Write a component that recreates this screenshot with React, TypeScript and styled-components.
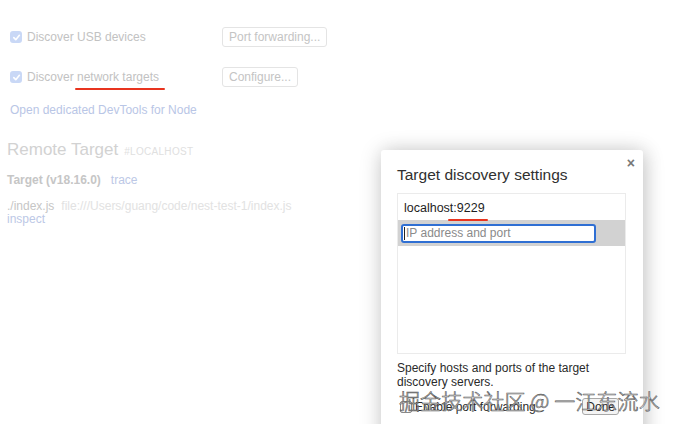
import React from "react";
import styled, { createGlobalStyle } from "styled-components";

const Global = createGlobalStyle`
  html, body { margin: 0; padding: 0; background: #fff; }
  body { font-family: "Liberation Sans", Arial, sans-serif; }
`;

const Page = styled.div`
  position: relative;
  width: 676px;
  height: 424px;
  overflow: hidden;
  background: #fff;
`;

const Content = styled.div`
  display: flex;
  flex-direction: column;
  padding: 27px 0 0 7px;
`;

const OptionRow = styled.div<{ $mt?: number }>`
  display: grid;
  grid-template-columns: 212px auto;
  align-items: center;
  height: 20px;
  margin-top: ${(p) => p.$mt ?? 0}px;
  padding-left: 3px;
`;

const CheckLabel = styled.label`
  display: flex;
  align-items: center;
  gap: 5px;
  font-size: 12px;
  color: #c2c2c2;
`;

const FakeCheck = styled.span`
  width: 12px;
  height: 12px;
  border-radius: 3px;
  background: #c9d8f6;
  display: inline-flex;
  align-items: center;
  justify-content: center;
`;

const Marked = styled.span`
  position: relative;
  &::after {
    content: "";
    position: absolute;
    left: -2px;
    right: -6px;
    bottom: -6px;
    height: 2.5px;
    border-radius: 2px;
    background: #e8341f;
  }
`;

const FadedButton = styled.button`
  justify-self: start;
  height: 20px;
  padding: 0 6px;
  font-family: "Liberation Sans", Arial, sans-serif;
  font-size: 12px;
  color: #c4c4c4;
  background: #fff;
  border: 1px solid #e4e4e4;
  border-radius: 3px;
`;

const NodeLink = styled.div`
  margin-top: 16px;
  padding-left: 3px;
  font-size: 12px;
  color: #b9c6e6;
`;

const Heading = styled.div`
  margin-top: 23px;
  display: flex;
  align-items: baseline;
  gap: 6px;
  font-size: 17px;
  color: #d2d2d2;
`;

const Tag = styled.span`
  font-size: 10px;
  color: #e0e0e0;
  letter-spacing: 0.3px;
`;

const TargetLine = styled.div`
  margin-top: 13px;
  display: flex;
  align-items: baseline;
  gap: 10px;
  font-size: 12px;
`;

const TargetName = styled.span`
  font-weight: bold;
  color: #c6c6c6;
`;

const SoftLink = styled.span`
  color: #bcc8e6;
`;

const FileLine = styled.div`
  margin-top: 13px;
  display: flex;
  gap: 7px;
  font-size: 12px;
  line-height: 13px;
  color: #c6c6c6;
`;

const FilePath = styled.span`
  color: #e2e2e2;
`;

const Inspect = styled.div`
  font-size: 12px;
  line-height: 13px;
  color: #bcc8e6;
`;

const Dialog = styled.div`
  position: absolute;
  left: 381px;
  top: 150px;
  width: 262px;
  height: 300px;
  box-sizing: border-box;
  padding: 14px 17px 0 16px;
  background: #fff;
  border-radius: 3px;
  box-shadow: 0 2px 22px rgba(0, 0, 0, 0.2), 4px 0 18px rgba(0, 0, 0, 0.08);
  display: flex;
  flex-direction: column;
`;

const Close = styled.span`
  position: absolute;
  top: 5px;
  right: 8px;
  font-size: 14px;
  font-weight: bold;
  color: #777;
`;

const Title = styled.div`
  font-size: 15.5px;
  color: #303030;
  line-height: 22px;
`;

const ListBox = styled.div`
  margin-top: 7px;
  height: 159px;
  border: 1px solid #ebebeb;
  display: flex;
  flex-direction: column;
`;

const ListItem = styled.div`
  height: 26px;
  display: flex;
  align-items: center;
  padding: 1px 0 0 6px;
  box-sizing: border-box;
  font-size: 12.5px;
  color: #1e1e1e;
  font-weight: 500;
`;

const Port = styled.span`
  position: relative;
  &::after {
    content: "";
    position: absolute;
    left: -5px;
    right: -3px;
    bottom: -6px;
    height: 2px;
    border-radius: 2px;
    background: #e8341f;
  }
`;

const SelectedRow = styled.div`
  height: 26px;
  background: #d2d2d2;
  display: flex;
  align-items: center;
  padding-left: 3px;
`;

const AddressInput = styled.div`
  width: 190px;
  height: 15px;
  border: 2px solid #2f6fd3;
  border-radius: 3px;
  background: #fff;
  display: flex;
  align-items: center;
  font-size: 12px;
  color: #8a8a8a;
  padding-left: 1px;
`;

const Caret = styled.span`
  width: 1px;
  height: 13px;
  background: #222;
  margin-right: 1px;
`;

const Hint = styled.div`
  margin-top: 7px;
  font-size: 12px;
  line-height: 14px;
  color: #2a2a2a;
  width: 210px;
`;

const Footer = styled.div`
  margin-top: 9px;
  display: flex;
  align-items: center;
  justify-content: space-between;
  padding-right: 7px;
`;

const PortCheck = styled.label`
  display: flex;
  align-items: center;
  gap: 3px;
  font-size: 12px;
  color: #2a2a2a;
  padding-left: 3px;
`;

const EmptyBox = styled.span`
  width: 10px;
  height: 10px;
  border: 1px solid #8a8a8a;
  border-radius: 2px;
  background: #fff;
`;

const DoneButton = styled.button`
  height: 17px;
  padding: 0 3px;
  font-family: "Liberation Sans", Arial, sans-serif;
  font-size: 12px;
  color: #222;
  background: #f4f4f4;
  border: 1px solid #a8a8a8;
  border-radius: 3px;
`;

const Watermark = styled.div`
  position: absolute;
  left: 399px;
  top: 385px;
  font-family: "Noto Sans CJK SC", "Noto Sans", sans-serif;
  font-weight: 300;
  font-size: 21px;
  line-height: 30px;
  white-space: nowrap;
  color: rgba(255, 255, 255, 0.92);
  -webkit-text-stroke: 0.6px #555;
  letter-spacing: 0.1px;
`;

const Check = () => (
  <svg width="9" height="9" viewBox="0 0 10 10">
    <path d="M2 5.2 L4.2 7.4 L8.2 2.6" stroke="#fff" strokeWidth="1.8" fill="none" strokeLinecap="round" strokeLinejoin="round" />
  </svg>
);

export default function App() {
  return (
    <Page>
      <Global />
      <Content>
        <OptionRow>
          <CheckLabel>
            <FakeCheck><Check /></FakeCheck>
            Discover USB devices
          </CheckLabel>
          <FadedButton>Port forwarding...</FadedButton>
        </OptionRow>
        <OptionRow $mt={20}>
          <CheckLabel>
            <FakeCheck><Check /></FakeCheck>
            <span>Discover <Marked>network targets</Marked></span>
          </CheckLabel>
          <FadedButton>Configure...</FadedButton>
        </OptionRow>
        <NodeLink>Open dedicated DevTools for Node</NodeLink>
        <Heading>
          Remote Target <Tag>#LOCALHOST</Tag>
        </Heading>
        <TargetLine>
          <TargetName>Target (v18.16.0)</TargetName>
          <SoftLink>trace</SoftLink>
        </TargetLine>
        <FileLine>
          <span>./index.js</span>
          <FilePath>file:///Users/guang/code/nest-test-1/index.js</FilePath>
        </FileLine>
        <Inspect>inspect</Inspect>
      </Content>

      <Dialog>
        <Close>×</Close>
        <Title>Target discovery settings</Title>
        <ListBox>
          <ListItem>
            localhost<Port>:9229</Port>
          </ListItem>
          <SelectedRow>
            <AddressInput>
              <Caret />
              IP address and port
            </AddressInput>
          </SelectedRow>
        </ListBox>
        <Hint>Specify hosts and ports of the target discovery servers.</Hint>
        <Footer>
          <PortCheck>
            <EmptyBox />
            Enable port forwarding
          </PortCheck>
          <DoneButton>Done</DoneButton>
        </Footer>
      </Dialog>

      <Watermark>掘金技术社区 @ 一江东流水</Watermark>
    </Page>
  );
}
